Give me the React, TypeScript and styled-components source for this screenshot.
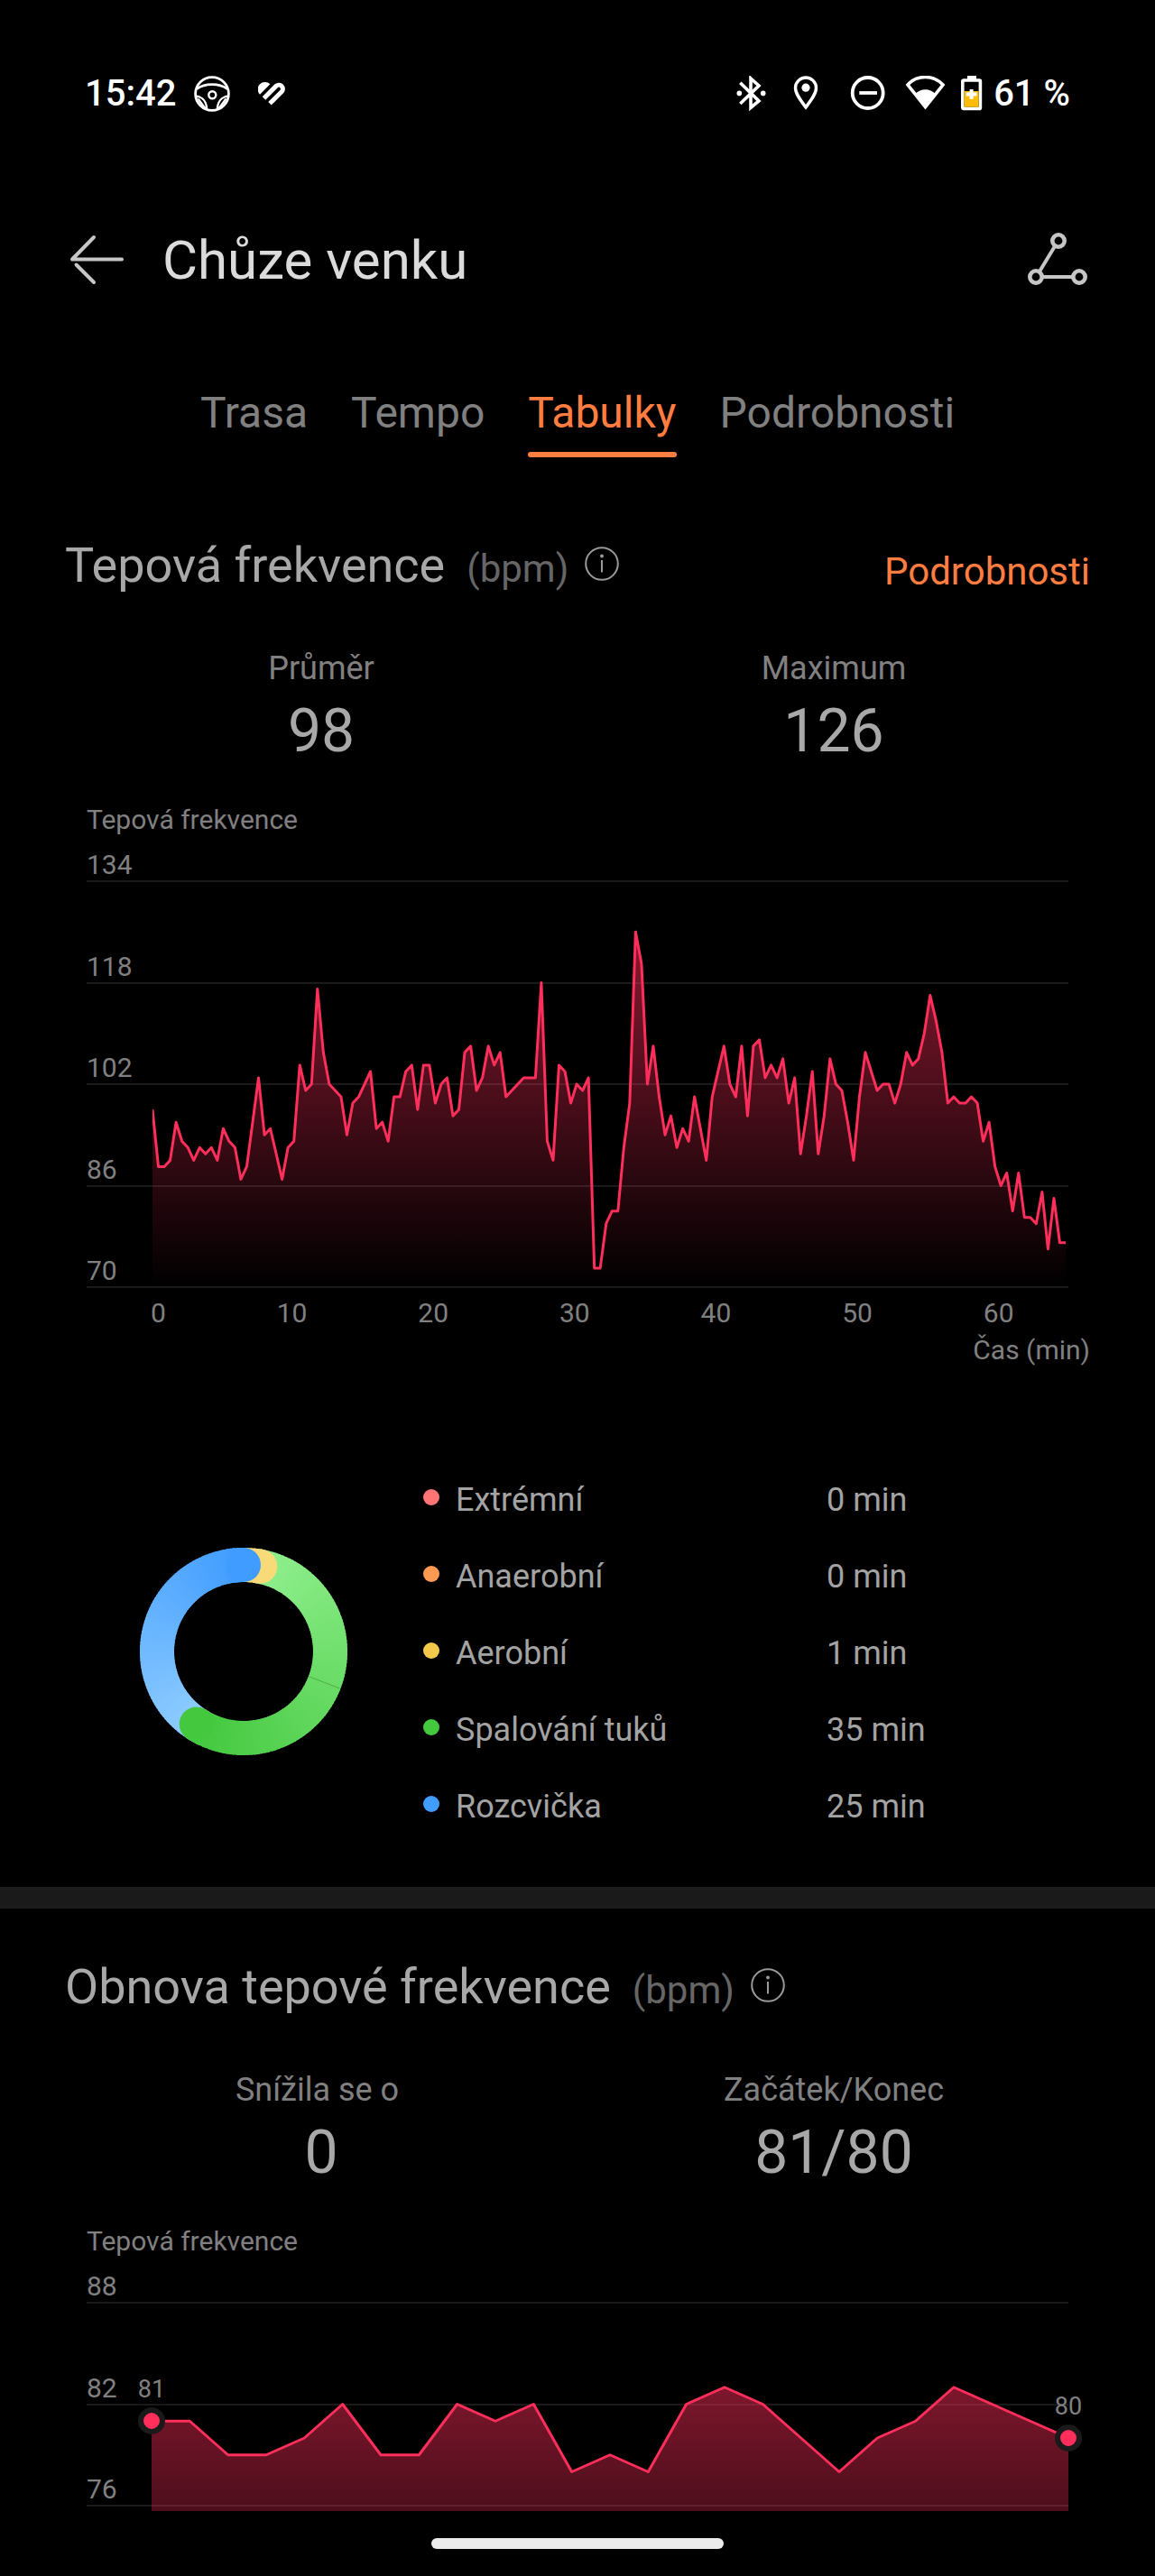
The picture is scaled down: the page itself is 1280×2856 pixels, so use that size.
import React from "react";
import styled, { createGlobalStyle } from "styled-components";

const color = {
  accent: "#ff7d41",
  pulse: "#ff2e5a",
  line: "#1a1a1a",
  title: "#dbdbdb",
  strong: "#a8a8a8",
  muted: "#808080",
  faint: "#666666",
  icon: "#c6c6c6",
};

const GlobalStyle = createGlobalStyle`
  *, *::before, *::after { box-sizing: border-box; }
  body {
    margin: 0;
    background: #000;
    font-family: Roboto, "Noto Sans", sans-serif;
    color: ${color.strong};
  }
  button { font: inherit; color: inherit; background: none; border: 0; padding: 0; cursor: pointer; }
  svg { display: block; }
`;

const Page = styled.div`
  display: flex;
  flex-direction: column;
  min-height: 100vh;
`;

/* ---------- status bar ---------- */

const StatusBar = styled.div`
  display: flex;
  justify-content: space-between;
  align-items: center;
  padding: 80px 94px;
  color: #fff;
  font-size: 40px;
  font-weight: 500;
  line-height: 48px;
`;

const StatusGroup = styled.div<{ $gap: number }>`
  display: flex;
  align-items: center;
  gap: ${(p) => p.$gap}px;
`;

/* ---------- header and tabs ---------- */

const Header = styled.header`
  display: flex;
  align-items: center;
  gap: 42px;
  height: 162px;
  padding: 0 72px;
`;

const PageTitle = styled.h1`
  flex: 1;
  margin: 0;
  color: ${color.title};
  font-size: 60px;
  font-weight: 400;
  line-height: 72px;
`;

const Tabs = styled.nav`
  display: flex;
  justify-content: center;
  gap: 48px;
  padding-top: 60px;
`;

const Tab = styled.button<{ $active?: boolean }>`
  color: ${(p) => (p.$active ? color.accent : color.muted)};
  font-size: 48px;
  line-height: 56px;

  &::after {
    content: "";
    display: block;
    height: 6px;
    margin-top: 15px;
    border-radius: 3px;
    background: ${(p) => (p.$active ? color.accent : "transparent")};
  }
`;

/* ---------- sections ---------- */

const Section = styled.section<{ $top: number }>`
  padding: ${(p) => p.$top}px 72px 0;
`;

const SectionHead = styled.div`
  display: flex;
  align-items: baseline;
  height: 64px;
`;

const SectionTitle = styled.h2`
  margin: 0;
  font-size: 54px;
  font-weight: 400;
  line-height: 64px;
`;

const Unit = styled.span`
  margin-left: 24px;
  color: ${color.faint};
  font-size: 42px;
`;

const InfoButton = styled.button`
  display: flex;
  align-items: center;
  align-self: flex-start;
  height: 60px;
  margin-left: 18px;
`;

const DetailsLink = styled.a`
  margin-left: auto;
  color: ${color.accent};
  font-size: 42px;
  line-height: 78px;
  text-decoration: none;
  align-self: flex-start;
`;

const Stats = styled.dl`
  display: grid;
  grid-template-columns: 1fr 1fr;
  margin: 60px 0 0;
  text-align: center;
`;

const StatLabel = styled.dt`
  color: ${color.muted};
  font-size: 36px;
  line-height: 44px;
  white-space: pre;
`;

const StatValue = styled.dd`
  margin: 10px 0 0;
  font-size: 66px;
  line-height: 76px;
`;

const Divider = styled.hr`
  width: 100%;
  height: 24px;
  margin: 49px 0 0;
  border: 0;
  background: ${color.line};
`;

/* ---------- charts ---------- */

const ChartFigure = styled.figure`
  margin: 43px 0 0;
  padding-left: 24px;
  color: ${color.muted};
  font-size: 30px;
  line-height: 34px;
`;

const Plot = styled.div<{ $tail: number }>`
  position: relative;
  margin: 16px 24px 0 0;
  padding-bottom: ${(p) => p.$tail}px;
`;

const Ticks = styled.div<{ $steps: number; $height: number }>`
  display: grid;
  grid-template-rows: 36px repeat(${(p) => p.$steps}, 1fr);
  height: ${(p) => p.$height + 36}px;
`;

const Tick = styled.div`
  display: flex;
  align-items: flex-end;
  border-bottom: 2px solid ${color.line};
`;

const Overlay = styled.div<{ $left: number; $right: number }>`
  position: absolute;
  top: 35px;
  bottom: 0;
  left: ${(p) => p.$left}px;
  right: ${(p) => p.$right}px;

  > svg {
    width: 100%;
    height: 100%;
  }
`;

const Marker = styled.div`
  position: absolute;
  width: 30px;
  height: 30px;
  margin: -15px 0 0 -15px;
  border: 6px solid ${color.line};
  border-radius: 50%;
  background: ${color.pulse};
`;

const MarkerLabel = styled.div`
  position: absolute;
  width: 60px;
  margin: -50px 0 0 -30px;
  font-size: 27px;
  line-height: 30px;
  text-align: center;
`;

const TimeAxis = styled.div`
  display: grid;
  grid-template-columns: 1fr repeat(6, 2fr);
  margin: 11px 23px 0 71px;
  text-align: center;

  > :first-child {
    text-align: left;
  }
`;

const AxisName = styled.figcaption`
  margin-top: 7px;
  text-align: right;
`;

interface ChartProps {
  id: string;
  values: number[];
  ticks: number[];
  tail?: number;
  inset: [number, number];
  markers?: boolean;
}

const TICK_STEP_PX = 225 / 2;
const FADE_PX = 450;

function Chart({ id, values, ticks, tail = 0, inset, markers }: ChartProps) {
  const steps = ticks.length - 1;
  const plotHeight = steps * TICK_STEP_PX;
  const scale = TICK_STEP_PX / (ticks[0] - ticks[1]);
  const height = plotHeight + tail + 1;
  const last = values.length - 1;
  const y = (v: number) => (ticks[0] - v) * scale;
  const points = values.map((v, i) => `${i},${y(v).toFixed(2)}`).join(" ");
  const ends = markers ? [0, last] : [];
  const base = Math.min(height, FADE_PX);

  return (
    <Plot $tail={tail}>
      <Ticks $steps={steps} $height={plotHeight}>
        {ticks.map((t) => (
          <Tick key={t}>{t}</Tick>
        ))}
      </Ticks>
      <Overlay $left={inset[0]} $right={inset[1]}>
        <svg viewBox={`0 0 ${last} ${height}`} preserveAspectRatio="none" aria-hidden="true">
          <defs>
            <linearGradient id={id} gradientUnits="userSpaceOnUse" x1="0" y1="0" x2="0" y2={FADE_PX}>
              <stop offset="0" stopColor={color.pulse} stopOpacity="0.62" />
              <stop offset="1" stopColor={color.pulse} stopOpacity="0" />
            </linearGradient>
          </defs>
          <polygon points={`0,${base} ${points} ${last},${base}`} fill={`url(#${id})`} />
          <polyline
            points={points}
            fill="none"
            stroke={color.pulse}
            strokeWidth="3"
            strokeLinejoin="round"
            vectorEffect="non-scaling-stroke"
          />
        </svg>
        {ends.map((i) => {
          const spot = { left: `${(i / last) * 100}%`, top: y(values[i]) };
          return (
            <React.Fragment key={i}>
              <Marker style={spot} />
              <MarkerLabel style={spot}>{values[i]}</MarkerLabel>
            </React.Fragment>
          );
        })}
      </Overlay>
    </Plot>
  );
}

/* ---------- zones ---------- */

const Zones = styled.div`
  display: flex;
  align-items: center;
  gap: 84px;
  margin-top: 104px;
  padding-left: 83px;
`;

const ZoneTable = styled.table`
  flex: 1;
  border-collapse: collapse;
  table-layout: fixed;
  font-size: 36px;
  line-height: 44px;
  color: #a3a3a3;

  th, td {
    height: 85px;
    padding: 5px 0 0;
    font-weight: 400;
    text-align: left;
  }

  td { width: 292px; }
`;

const ZoneName = styled.span`
  display: flex;
  align-items: flex-start;
  gap: 18px;
`;

const Dot = styled.i<{ $color: string }>`
  width: 18px;
  height: 18px;
  margin-top: 10px;
  border-radius: 50%;
  background: ${(p) => p.$color};
`;

const RING = { c: 115, r: 96, w: 38 };

const polar = (deg: number, r = RING.r) => {
  const a = ((deg - 90) * Math.PI) / 180;
  return [RING.c + r * Math.cos(a), RING.c + r * Math.sin(a)];
};

const mix = (a: number[], b: number[], t: number) =>
  `rgb(${a.map((v, i) => Math.round(v + (b[i] - v) * t)).join(",")})`;

function Arc({ from, to, start, end }: { from: number; to: number; start: number[]; end: number[] }) {
  const count = Math.max(1, Math.round((to - from) / 2));
  const step = (to - from) / count;
  const [capX, capY] = polar(to);
  return (
    <g>
      {Array.from({ length: count }, (_, i) => {
        const a = from + i * step;
        const [x1, y1] = polar(a);
        const [x2, y2] = polar(Math.min(to, a + step + 1));
        return (
          <path
            key={i}
            d={`M${x1} ${y1}A${RING.r} ${RING.r} 0 0 1 ${x2} ${y2}`}
            stroke={mix(start, end, (i + 1) / count)}
            strokeWidth={RING.w}
            fill="none"
          />
        );
      })}
      <circle cx={capX} cy={capY} r={RING.w / 2} fill={mix(start, end, 1)} />
    </g>
  );
}

function ZoneRing() {
  const [sx, sy] = polar(111, 78);
  const [ex, ey] = polar(111, 114);
  return (
    <svg width="230" height="230" viewBox="0 0 230 230" aria-hidden="true">
      <Arc from={205} to={360} start={[148, 208, 255]} end={[64, 156, 255]} />
      <Arc from={8} to={213} start={[145, 240, 143]} end={[67, 200, 62]} />
      <path d={`M${sx} ${sy}L${ex} ${ey}`} stroke="#4fae4c" strokeWidth="1" />
      <Arc from={0} to={11} start={[248, 218, 120]} end={[248, 218, 120]} />
      <Arc from={350} to={360} start={[68, 158, 255]} end={[64, 156, 255]} />
    </svg>
  );
}

/* ---------- system navigation ---------- */

const NavBar = styled.footer`
  display: flex;
  justify-content: center;
  margin-top: auto;
  padding: 30px 0;
`;

const HomeHandle = styled.div`
  width: 324px;
  height: 12px;
  border-radius: 6px;
  background: #ebebeb;
`;

/* ---------- icons ---------- */

const WheelIcon = () => (
  <svg width="40" height="40" viewBox="0 0 40 40" fill="none" stroke="#fff" strokeWidth="2.8">
    <circle cx="20" cy="20" r="18.4" />
    <path d="M3 14.5C8 11 14 9.6 20 9.6s12 1.4 17 4.9" />
    <circle cx="20.3" cy="21.3" r="4" strokeWidth="2.4" />
    <path d="M2.5 22.6C9.5 23.5 14 29 14.2 37.5M4.5 25.5 12.5 36.5" strokeWidth="2.4" />
    <path d="M37.5 22.6C30.5 23.5 26 29 25.8 37.5M35.5 25.5 27.5 36.5" strokeWidth="2.4" />
  </svg>
);

const HealthIcon = () => (
  <svg width="31" height="28" viewBox="0 0 31 28" fill="none" stroke="#fff">
    <path d="M2 14.7A7.3 7.3 0 0 1 13.4 3.3Z" fill="#fff" stroke="none" />
    <path d="M6.5 19 20.2 5.2A4.400 4.400 0 0 1 26.400 11.400L13 24.800" strokeWidth="5" />
  </svg>
);

const BluetoothIcon = () => (
  <svg width="34" height="40" viewBox="0 0 34 40" fill="none" stroke="#fff" strokeWidth="3.6">
    <path d="M5.3 7.7 26 28 17 35.5V3L26 11 5.3 31" />
    <circle cx="4.3" cy="19.4" r="2.8" fill="#fff" stroke="none" />
    <circle cx="30.7" cy="19.4" r="2.8" fill="#fff" stroke="none" />
  </svg>
);

const PinIcon = () => (
  <svg width="56" height="40" viewBox="0 0 56 40" fill="none" stroke="#fff" strokeWidth="3.4">
    <path d="M28 35C22 27 16.5 20 16.5 13.5A11.5 11.5 0 0 1 39.5 13.5C39.5 20 34 27 28 35Z" />
    <circle cx="28" cy="13.2" r="4.6" fill="#fff" stroke="none" />
  </svg>
);

const DoNotDisturbIcon = () => (
  <svg width="50" height="40" viewBox="0 0 50 40" fill="none" stroke="#fff" strokeWidth="3.8">
    <circle cx="24.7" cy="19" r="17" />
    <path d="M15.3 19H35" />
  </svg>
);

const WifiIcon = () => (
  <svg width="46" height="40" viewBox="0 0 46 40">
    <path d="M3 10A26.6 26.6 0 0 1 42 10L22.5 34.5Z" fill="none" stroke="#fff" strokeWidth="3.6" />
    <path d="M11.5 20A15 15 0 0 1 33.5 20L22.5 36Z" fill="#fff" />
  </svg>
);

const BatteryIcon = () => (
  <svg width="24" height="40" viewBox="0 0 24 40">
    <rect x="7" y="0" width="10" height="5" fill="#fff" />
    <rect x="1.8" y="5" width="19.6" height="31.4" rx="1" fill="#000" stroke="#fff" strokeWidth="3.6" />
    <rect x="3.6" y="17" width="16" height="17.6" fill="#fbbc04" />
    <path d="M5.7 20.4H17.5M11.6 15V26" stroke="#fff" strokeWidth="4" />
  </svg>
);

const BackIcon = () => (
  <svg width="66" height="60" viewBox="0 0 66 60" fill="none" stroke={color.icon} strokeWidth="4" strokeLinecap="round">
    <path d="M32 4 8 28.5H63M12.5 34.5 32 54" strokeLinejoin="round" />
  </svg>
);

const RouteIcon = () => (
  <svg width="72" height="64" viewBox="0 0 72 64" fill="none" stroke={color.icon} strokeWidth="4">
    <path d="M33 16 16 44M20 50H52" />
    <g strokeWidth="4.6">
      <circle cx="37" cy="10" r="6.7" />
      <circle cx="12" cy="50" r="6.7" />
      <circle cx="60" cy="50" r="6.7" />
    </g>
  </svg>
);

const InfoIcon = () => (
  <svg width="38" height="38" viewBox="0 0 38 38" fill="none" stroke="#999" strokeWidth="2">
    <circle cx="19" cy="19" r="17.8" />
    <path d="M19 15V28.5" />
    <circle cx="19" cy="10.5" r="2" fill="#999" stroke="none" />
  </svg>
);

/* ---------- data ---------- */

const heartRate = [
  98, 89, 89, 90, 96, 93, 92, 90, 92, 91, 92, 90, 95, 93, 92, 87, 89, 96, 103, 94, 95, 91, 87, 92, 93, 105,
  101, 102, 117, 107, 102, 101, 100, 94, 99, 100, 102, 104, 95, 96, 93, 100, 100, 104, 105, 98, 105, 105, 99,
  102, 103, 97, 98, 107, 108, 101, 103, 108, 105, 107, 100, 101, 102, 103, 103, 103, 118, 93, 90, 105, 104,
  99, 102, 101, 103, 73, 73, 80, 82, 82, 92, 99, 126, 121, 102, 108, 100, 94, 97, 92, 95, 93, 100, 95, 90,
  100, 104, 108, 102, 100, 108, 97, 108, 109, 103, 105, 103, 106, 99, 103, 91, 97, 104, 91, 97, 106, 102,
  101, 96, 90, 100, 107, 104, 101, 102, 102, 99, 102, 107, 105, 106, 110, 116, 112, 107, 99, 100, 99, 99,
  100, 99, 93, 96, 89, 86, 88, 82, 88, 81, 81, 80, 85, 76, 84, 77, 77,
];

const recovery = [
  81, 81, 79, 79, 80, 82, 79, 79, 82, 81, 82, 78, 79, 78, 82, 83, 82, 80, 78, 80, 81, 83, 82, 81, 80,
];

const zones = [
  { name: "Extrémní", time: "0 min", color: "#ff7575" },
  { name: "Anaerobní", time: "0 min", color: "#fb9a50" },
  { name: "Aerobní", time: "1 min", color: "#f4c84a" },
  { name: "Spalování tuků", time: "35 min", color: "#43c83e" },
  { name: "Rozcvička", time: "25 min", color: "#409cff" },
];

const tabs = ["Trasa", "Tempo", "Tabulky", "Podrobnosti"];
const minutes = [0, 10, 20, 30, 40, 50, 60];

function Heading({ title, children }: { title: string; children?: React.ReactNode }) {
  return (
    <SectionHead>
      <SectionTitle>{title}</SectionTitle>
      <Unit>(bpm)</Unit>
      <InfoButton type="button" aria-label="Informace">
        <InfoIcon />
      </InfoButton>
      {children}
    </SectionHead>
  );
}

function StatPair({ items }: { items: [string, string][] }) {
  return (
    <Stats>
      {items.map(([label, value]) => (
        <div key={label}>
          <StatLabel>{label}</StatLabel>
          <StatValue>{value}</StatValue>
        </div>
      ))}
    </Stats>
  );
}

export default function App() {
  return (
    <Page>
      <GlobalStyle />
      <StatusBar>
        <StatusGroup $gap={20}>
          <span>15:42</span>
          <StatusGroup $gap={31}>
            <WheelIcon />
            <HealthIcon />
          </StatusGroup>
        </StatusGroup>
        <StatusGroup $gap={16}>
          <BluetoothIcon />
          <PinIcon />
          <DoNotDisturbIcon />
          <WifiIcon />
          <StatusGroup $gap={12}>
            <BatteryIcon />
            <span>61 %</span>
          </StatusGroup>
        </StatusGroup>
      </StatusBar>

      <Header>
        <button type="button" aria-label="Zpět">
          <BackIcon />
        </button>
        <PageTitle>Chůze venku</PageTitle>
        <button type="button" aria-label="Sdílet">
          <RouteIcon />
        </button>
      </Header>

      <Tabs>
        {tabs.map((t) => (
          <Tab key={t} type="button" $active={t === "Tabulky"}>
            {t}
          </Tab>
        ))}
      </Tabs>

      <main>
        <Section $top={88}>
          <Heading title="Tepová frekvence">
            <DetailsLink href="#podrobnosti">Podrobnosti</DetailsLink>
          </Heading>
          <StatPair items={[["Průměr", "98"], ["Maximum", "126"]]} />
          <ChartFigure>
            <div>Tepová frekvence</div>
            <Chart id="pulse-fill" values={heartRate} ticks={[134, 118, 102, 86, 70]} inset={[73, 3]} />
            <TimeAxis>
              {minutes.map((m) => (
                <span key={m}>{m}</span>
              ))}
            </TimeAxis>
            <AxisName>Čas (min)</AxisName>
          </ChartFigure>
          <Zones>
            <ZoneRing />
            <ZoneTable>
              <tbody>
                {zones.map((z) => (
                  <tr key={z.name}>
                    <th scope="row">
                      <ZoneName>
                        <Dot $color={z.color} />
                        {z.name}
                      </ZoneName>
                    </th>
                    <td>{z.time}</td>
                  </tr>
                ))}
              </tbody>
            </ZoneTable>
          </Zones>
        </Section>

        <Divider />

        <Section $top={55}>
          <Heading title="Obnova tepové frekvence" />
          <StatPair items={[["Snížila se o ", "0"], ["Začátek/Konec", "81/80"]]} />
          <ChartFigure>
            <div>Tepová frekvence</div>
            <Chart id="recovery-fill" values={recovery} ticks={[88, 82, 76]} tail={5} inset={[72, 0]} markers />
          </ChartFigure>
        </Section>
      </main>

      <NavBar>
        <HomeHandle />
      </NavBar>
    </Page>
  );
}
